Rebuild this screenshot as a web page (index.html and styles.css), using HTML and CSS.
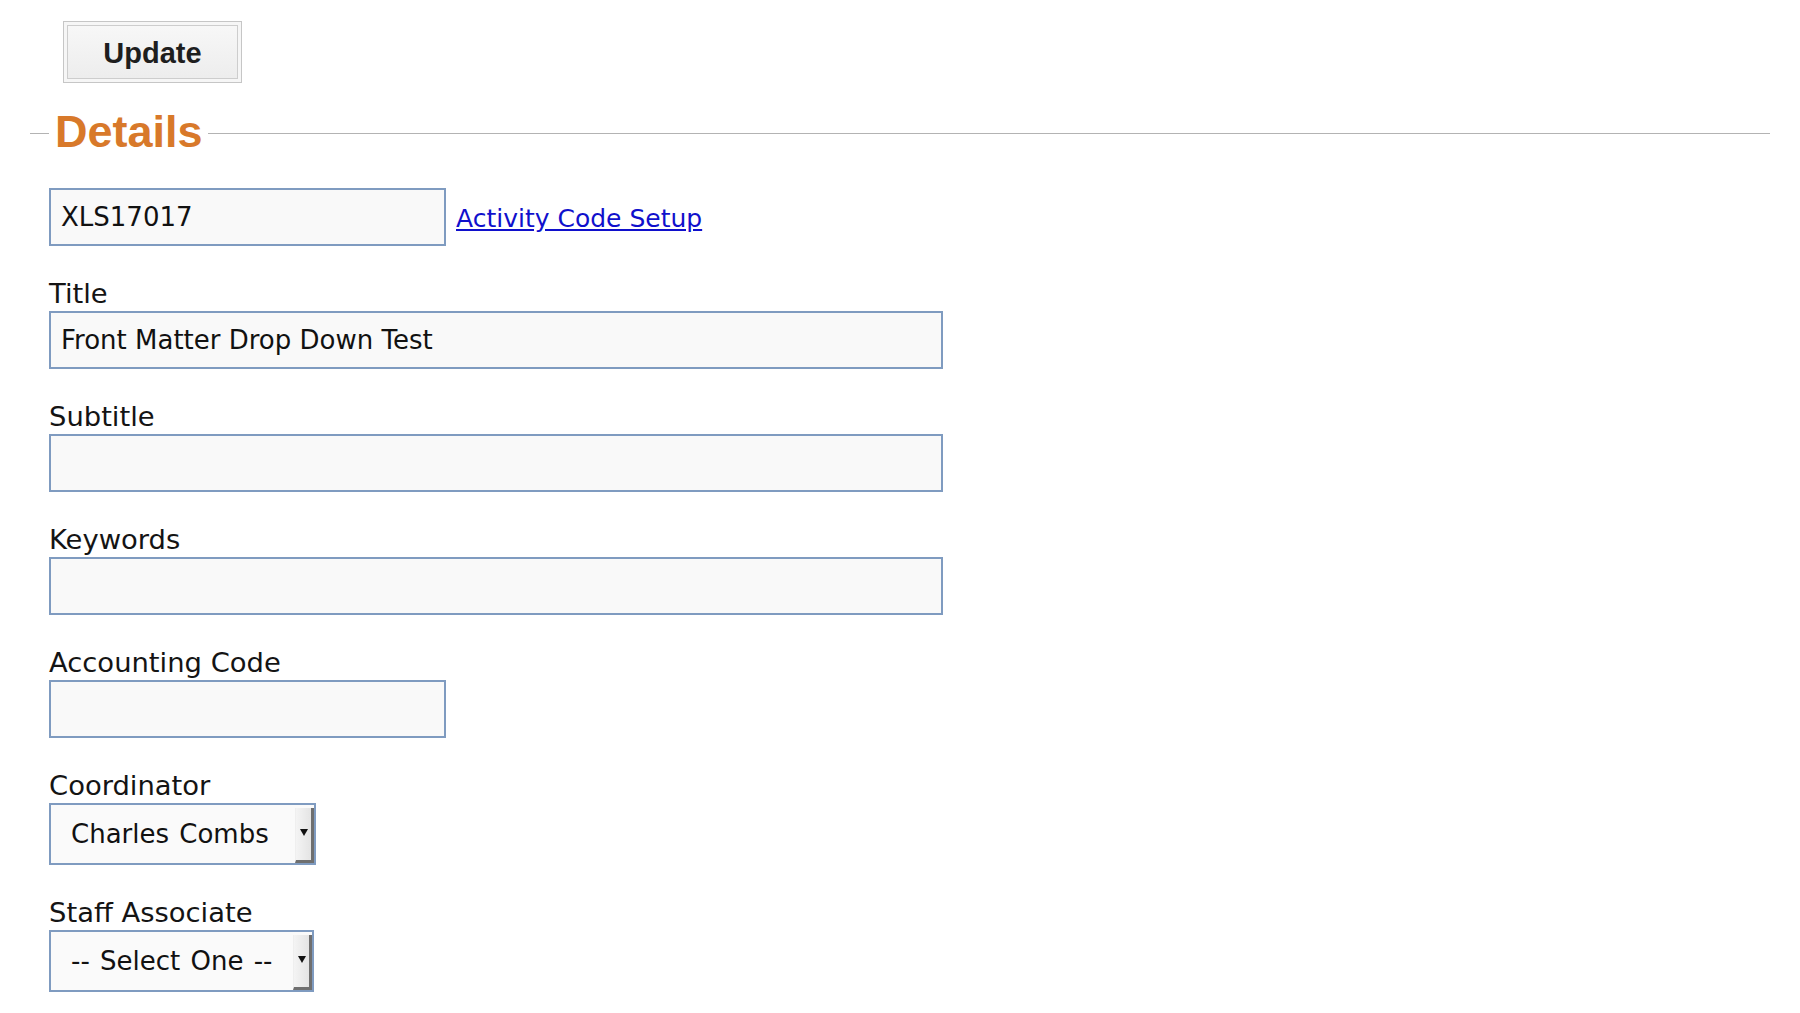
FILE: index.html
```html
<!DOCTYPE html>
<html lang="en">
<head>
<meta charset="utf-8">
<title>Details</title>
<link rel="stylesheet" href="styles.css">
</head>
<body>
<div class="page">
  <div class="toolbar">
    <button class="btn" type="button">Update</button>
  </div>
  <section class="details">
    <div class="details-head">
      <span class="rule rule--short"></span>
      <h2 class="details-title">Details</h2>
      <span class="rule rule--long"></span>
    </div>
    <div class="details-body">
      <div class="code-row">
        <input class="field field--short" type="text" value="XLS17017">
        <a class="link" href="#">Activity Code Setup</a>
      </div>
      <div class="group">
        <label class="label">Title</label>
        <input class="field field--wide" type="text" value="Front Matter Drop Down Test">
      </div>
      <div class="group">
        <label class="label">Subtitle</label>
        <input class="field field--wide" type="text" value="">
      </div>
      <div class="group">
        <label class="label">Keywords</label>
        <input class="field field--wide" type="text" value="">
      </div>
      <div class="group">
        <label class="label">Accounting Code</label>
        <input class="field field--short" type="text" value="">
      </div>
      <div class="group">
        <label class="label">Coordinator</label>
        <div class="select select--coord">
          <select class="select-input">
            <option>Charles Combs</option>
          </select>
          <span class="select-btn"><span class="caret"></span></span>
        </div>
      </div>
      <div class="group">
        <label class="label">Staff Associate</label>
        <div class="select select--staff">
          <select class="select-input">
            <option>-- Select One --</option>
          </select>
          <span class="select-btn"><span class="caret"></span></span>
        </div>
      </div>
    </div>
  </section>
</div>
</body>
</html>
```

FILE: styles.css
```css
html, body {
  margin: 0;
  padding: 0;
  background: #ffffff;
}

body {
  font-family: "DejaVu Sans", Verdana, sans-serif;
  color: #111111;
}

.page {
  padding: 21px 30px 0 30px;
}

.toolbar {
  padding-left: 33px;
}

.btn {
  display: block;
  width: 179px;
  height: 62px;
  margin: 0;
  padding: 2px 0 0 0;
  border: 1px solid #c6c6c6;
  background: linear-gradient(#f8f8f8, #ececec);
  box-shadow: inset 0 0 0 3px #f6f6f6, inset 0 0 0 4px #cdcdcd;
  font-family: "Liberation Sans", Arial, sans-serif;
  font-weight: bold;
  font-size: 29px;
  color: #1e1e1e;
  cursor: pointer;
}

.details-head {
  display: flex;
  align-items: center;
  margin-top: 24px;
}

.rule {
  height: 1px;
  margin-top: 3px;
  background: #b3b3b3;
}

.rule--short {
  width: 19px;
  flex: none;
}

.rule--long {
  flex: 1;
}

.details-title {
  margin: 0 5px 0 6px;
  font-family: "Liberation Sans", Arial, sans-serif;
  font-weight: bold;
  font-size: 45px;
  line-height: 49px;
  color: #d8792a;
}

.details-body {
  padding-left: 19px;
  padding-top: 32px;
}

.code-row {
  display: flex;
  align-items: center;
  gap: 10px;
  margin-bottom: 32px;
}

.field {
  display: block;
  box-sizing: border-box;
  height: 58px;
  margin: 0;
  padding: 0 10px;
  border: 2px solid #7f9bc0;
  background: #f9f9f9;
  font-family: "DejaVu Sans", Verdana, sans-serif;
  font-size: 26px;
  color: #111111;
  outline: none;
}

.field--short {
  width: 397px;
}

.field--wide {
  width: 894px;
}

.link {
  font-size: 25px;
  color: #1010cc;
  text-decoration: underline;
  padding-top: 2px;
}

.group {
  margin-bottom: 32px;
}

.label {
  display: block;
  font-size: 27.4px;
  line-height: 31px;
  margin-bottom: 2px;
  color: #141414;
}

.select {
  display: flex;
  box-sizing: border-box;
  height: 62px;
  border: 2px solid #7f9bc0;
  background: #fafafa;
}

.select--coord {
  width: 267px;
}

.select--staff {
  width: 265px;
}

.select-input {
  flex: 1;
  min-width: 0;
  -webkit-appearance: none;
  appearance: none;
  border: none;
  background: transparent;
  margin: 0;
  padding: 0 0 0 20px;
  font-family: "DejaVu Sans", Verdana, sans-serif;
  font-size: 26px;
  word-spacing: 2px;
  color: #111111;
  outline: none;
}

.select-btn {
  flex: none;
  width: 15px;
  margin-top: 3px;
  display: flex;
  align-items: center;
  justify-content: center;
  background: linear-gradient(to right, #f4f4f4, #e4e4e4);
  border-left: 1px solid #efefef;
  border-right: 3px solid #6f6f6f;
  border-bottom: 3px solid #6f6f6f;
}

.caret {
  width: 0;
  height: 0;
  margin-top: -3px;
  border-left: 4px solid transparent;
  border-right: 4px solid transparent;
  border-top: 7px solid #111111;
}
```
